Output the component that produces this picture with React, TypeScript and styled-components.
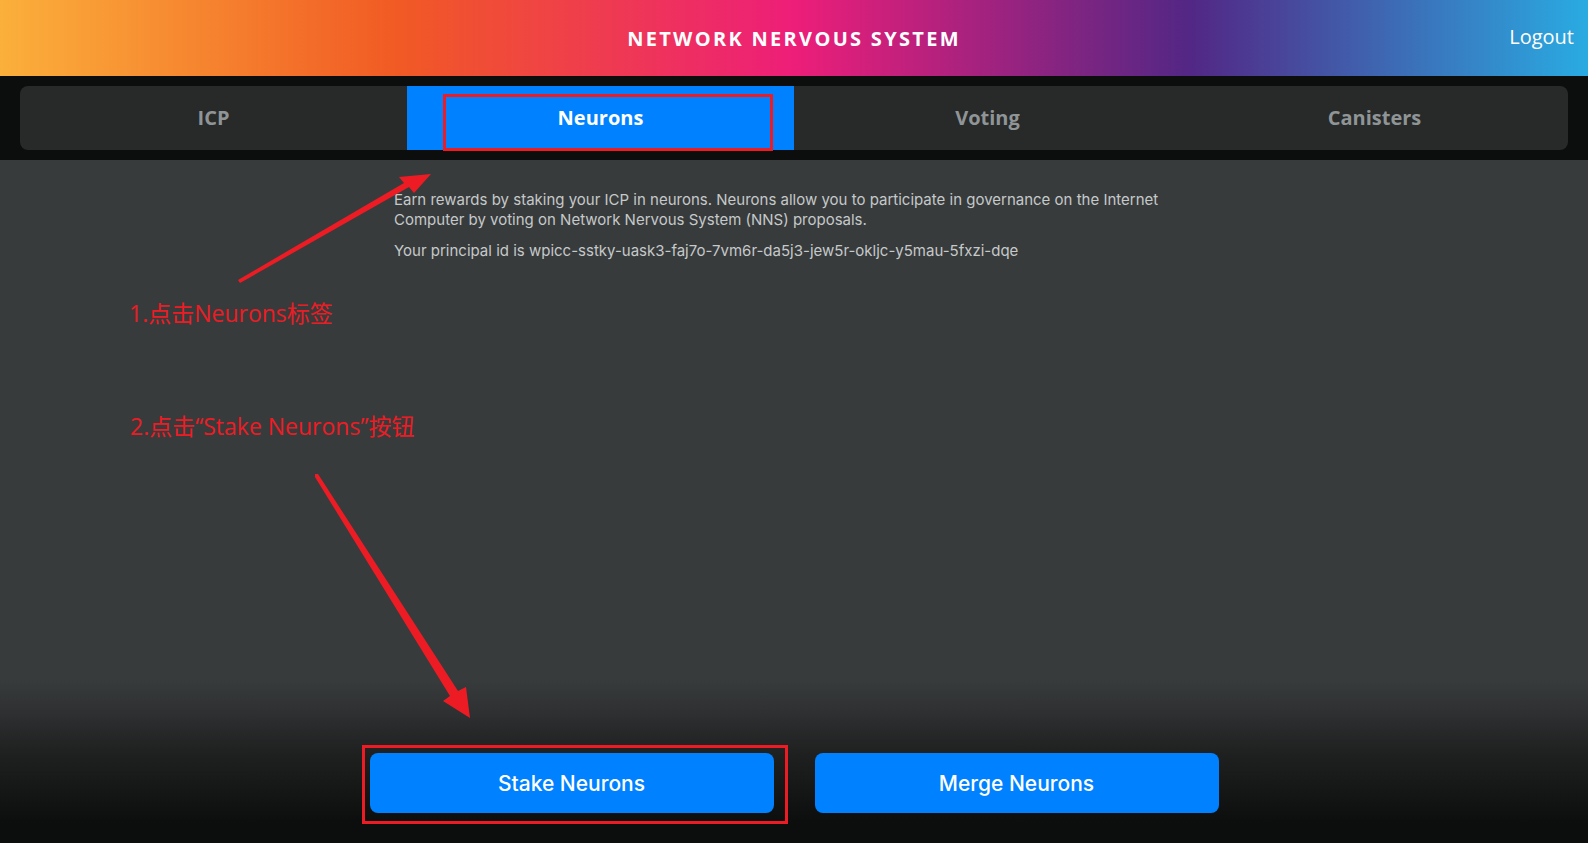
import React from "react";
import styled, { createGlobalStyle } from "styled-components";

const GlobalStyle = createGlobalStyle`
  html, body { margin: 0; padding: 0; }
  body {
    background: #383b3c;
    font-family: "Open Sans", "Noto Sans", sans-serif;
    overflow: hidden;
  }
`;

const Page = styled.div`
  position: relative;
  min-height: 100vh;
  display: flex;
  flex-direction: column;
`;

const Header = styled.header`
  height: 76px;
  display: grid;
  grid-template-columns: 1fr auto 1fr;
  align-items: center;
  background: linear-gradient(
    90deg,
    #fbb03b 0%,
    #f15a24 25%,
    #ed1e79 50%,
    #522785 75%,
    #29abe2 100%
  );
`;

const Title = styled.h1`
  grid-column: 2;
  margin: 0;
  color: #fff;
  font-family: "Open Sans", sans-serif;
  font-weight: 700;
  font-size: 20px;
  letter-spacing: 2.3px;
`;

const Logout = styled.button`
  justify-self: end;
  margin-right: 14px;
  margin-top: -4px;
  background: none;
  border: none;
  color: #fff;
  font-family: "Open Sans", sans-serif;
  font-size: 20px;
  padding: 0;
  cursor: pointer;
`;

const NavBand = styled.nav`
  background: #0c0d0d;
  padding: 10px 20px 10px 20px;
`;

const TabBar = styled.div`
  display: grid;
  grid-template-columns: repeat(4, 1fr);
  height: 64px;
  background: #282929;
  border-radius: 8px;
  overflow: hidden;
`;

const Tab = styled.button<{ $active?: boolean }>`
  border: none;
  background: ${(p) => (p.$active ? "#0081ff" : "transparent")};
  color: ${(p) => (p.$active ? "#ffffff" : "#8f9596")};
  font-family: "Open Sans", sans-serif;
  font-weight: 700;
  font-size: 20px;
  cursor: pointer;
  padding: 0 0 2px 0;
`;

const Content = styled.main`
  width: 800px;
  margin: 0 auto;
  padding-top: 30px;
`;

const Text = styled.p`
  margin: 0 0 11px 0;
  color: #c5c9ca;
  font-family: "Inter", sans-serif;
  font-size: 15px;
  line-height: 20px;
`;

const Footer = styled.footer`
  margin-top: auto;
  display: flex;
  justify-content: center;
  gap: 41px;
  padding: 73px 0 30px 0;
  background: linear-gradient(
    180deg,
    rgba(56, 59, 60, 1) 0%,
    #2e3031 20%,
    #1f2020 45%,
    #141515 70%,
    #0c0d0d 88%,
    #0c0d0d 100%
  );
`;

const ActionButton = styled.button`
  width: 404px;
  height: 60px;
  border: none;
  border-radius: 8px;
  background: #0081ff;
  color: #fff;
  font-family: "Inter", sans-serif;
  font-size: 21px;
  font-weight: 500;
  cursor: pointer;
`;

const Overlay = styled.svg`
  position: absolute;
  left: 0;
  top: 0;
  width: 1588px;
  height: 843px;
  pointer-events: none;
`;

const Note = styled.div<{ $top: number; $left: number }>`
  position: absolute;
  top: ${(p) => p.$top}px;
  left: ${(p) => p.$left}px;
  color: #ed1c24;
  font-family: "Open Sans", "Noto Sans CJK SC", sans-serif;
  font-size: 23px;
  line-height: 30px;
  white-space: nowrap;
  pointer-events: none;
`;

const Frame = styled.div<{ $top: number; $left: number; $w: number; $h: number }>`
  position: absolute;
  top: ${(p) => p.$top}px;
  left: ${(p) => p.$left}px;
  width: ${(p) => p.$w}px;
  height: ${(p) => p.$h}px;
  box-sizing: border-box;
  border: 3px solid #ed1c24;
  pointer-events: none;
`;

export default function App() {
  return (
    <>
      <GlobalStyle />
      <Page>
        <Header>
          <Title>NETWORK NERVOUS SYSTEM</Title>
          <Logout>Logout</Logout>
        </Header>
        <NavBand>
          <TabBar>
            <Tab>ICP</Tab>
            <Tab $active>Neurons</Tab>
            <Tab>Voting</Tab>
            <Tab>Canisters</Tab>
          </TabBar>
        </NavBand>
        <Content>
          <Text>
            Earn rewards by staking your ICP in neurons. Neurons allow you to participate in governance on the
            Internet Computer by voting on Network Nervous System (NNS) proposals.
          </Text>
          <Text>Your principal id is wpicc-sstky-uask3-faj7o-7vm6r-da5j3-jew5r-okljc-y5mau-5fxzi-dqe</Text>
        </Content>
        <Footer>
          <ActionButton>Stake Neurons</ActionButton>
          <ActionButton>Merge Neurons</ActionButton>
        </Footer>

        <Frame $top={94} $left={443} $w={330} $h={57} />
        <Frame $top={745} $left={362} $w={426} $h={79} />
        <Note $top={298} $left={129}>1.点击Neurons标签</Note>
        <Note $top={411} $left={130}>2.点击“Stake Neurons”按钮</Note>
        <Overlay viewBox="0 0 1588 843">
          <polygon
            fill="#ed1c24"
            points="238,280 404,183 399,177 431,174 414,193 409,187 240,283"
          />
          <polygon
            fill="#ed1c24"
            points="315,474 318,474 458,691 466,687 470,718 443,701 450,696 315,477"
          />
        </Overlay>
      </Page>
    </>
  );
}
